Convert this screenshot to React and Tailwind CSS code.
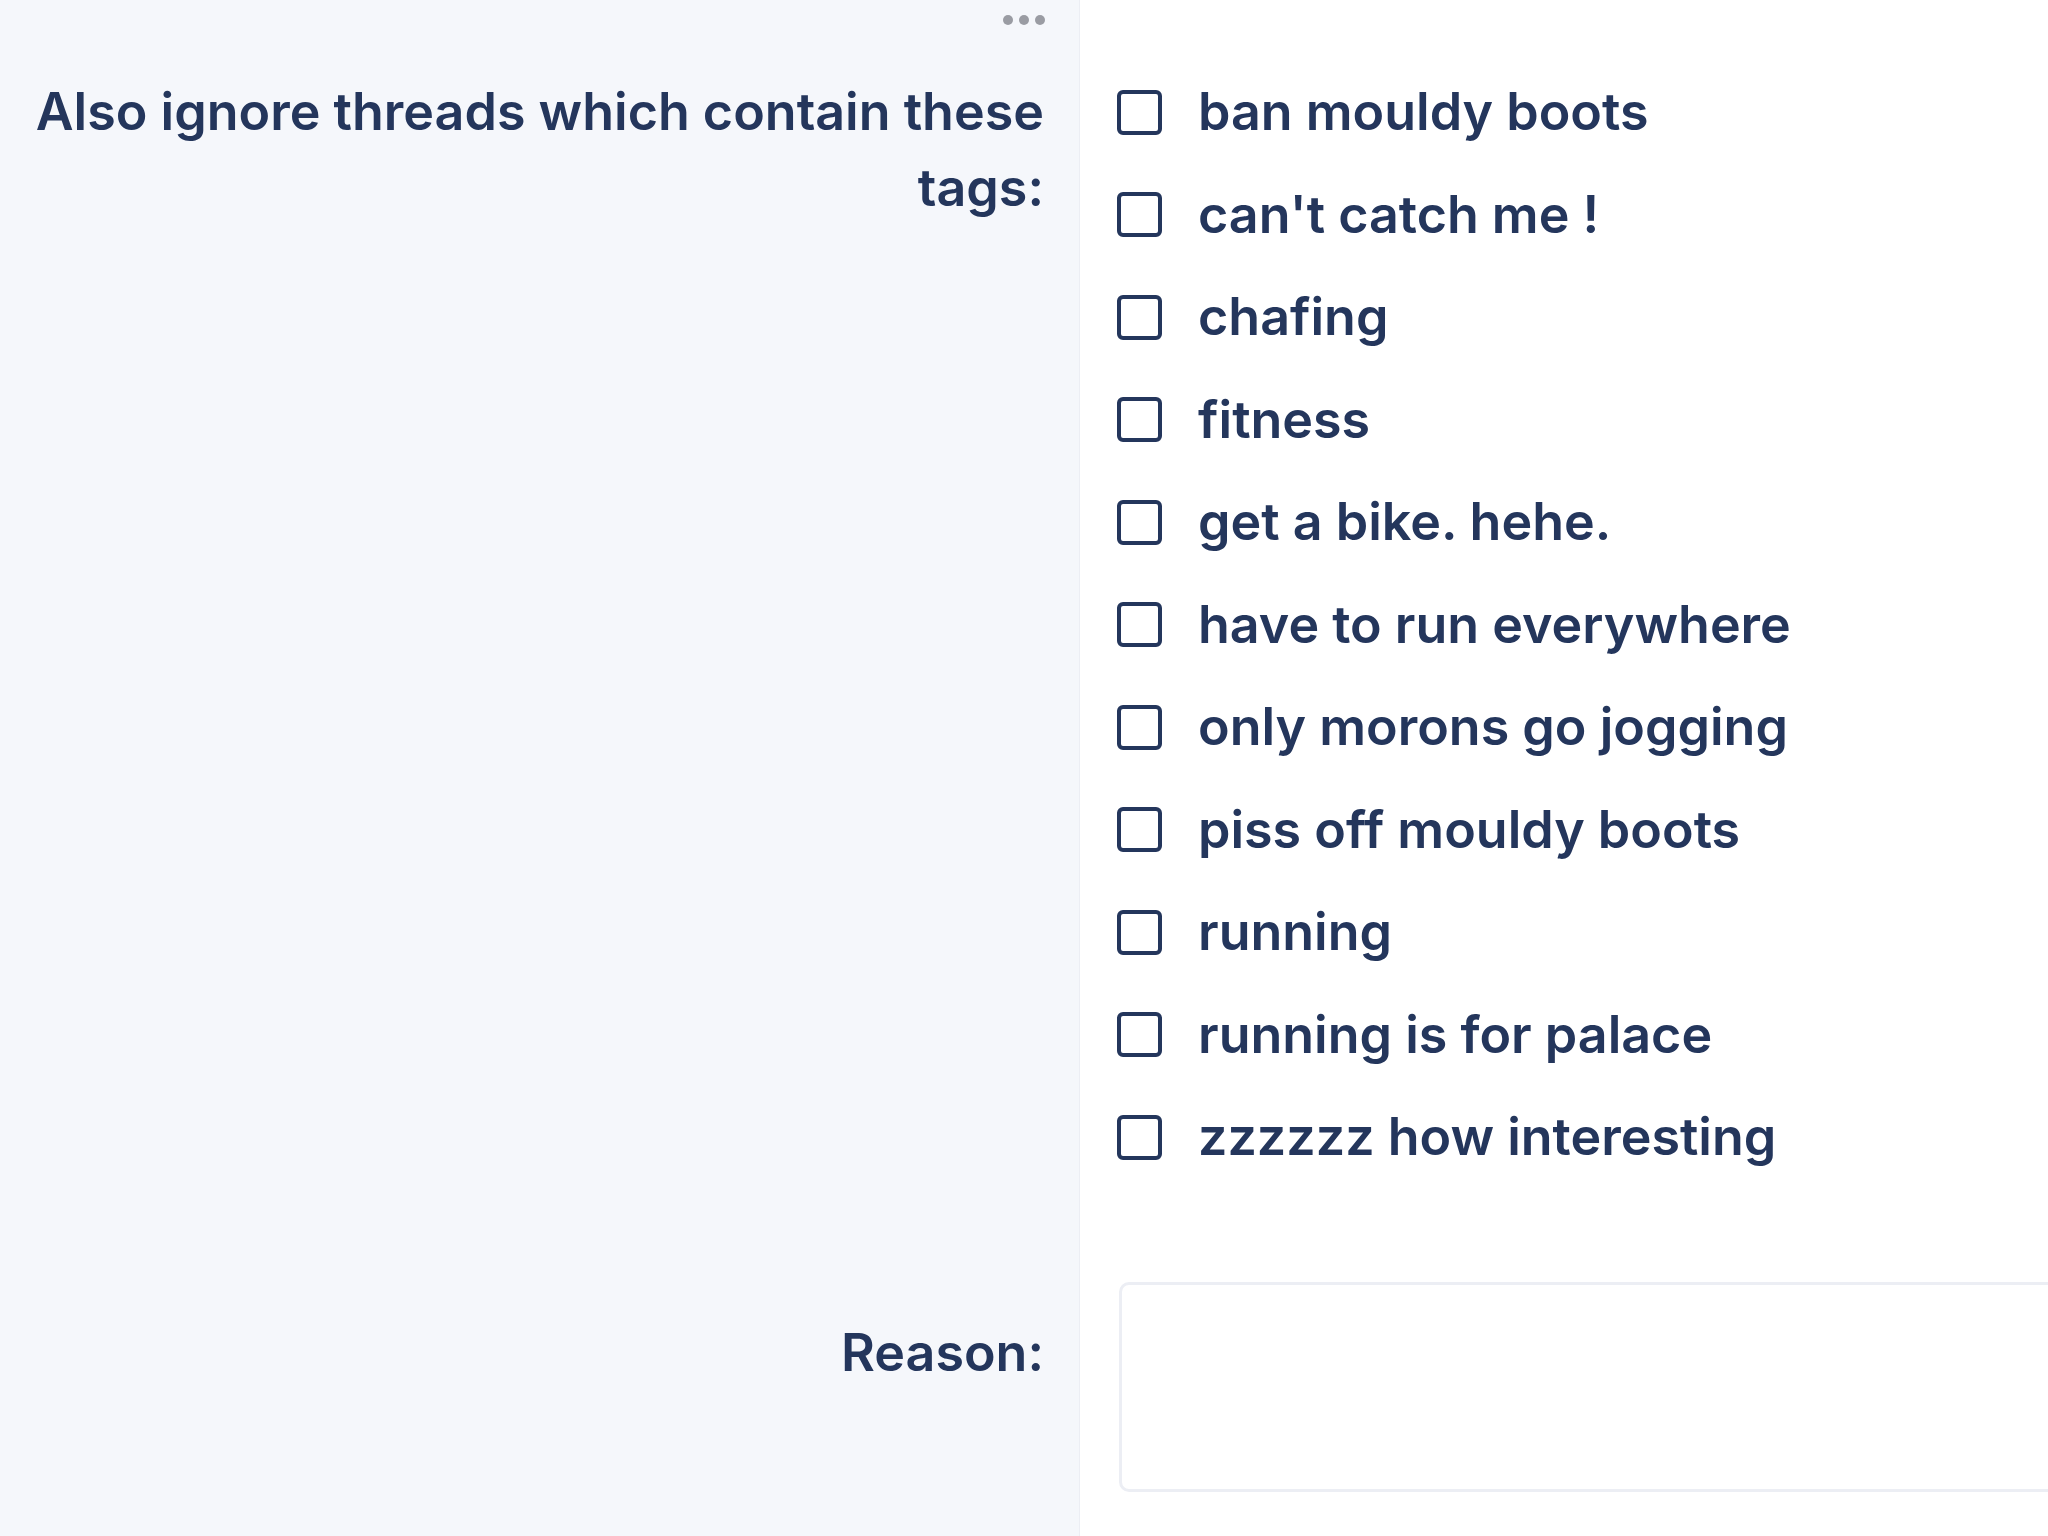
import React from "react";

const tags = [
  "ban mouldy boots",
  "can't catch me !",
  "chafing",
  "fitness",
  "get a bike. hehe.",
  "have to run everywhere",
  "only morons go jogging",
  "piss off mouldy boots",
  "running",
  "running is for palace",
  "zzzzzz how interesting",
];

export default function App() {
  return (
    <div
      className="w-[2048px] h-[1536px] overflow-hidden flex flex-col bg-white text-[#24365c]"
      style={{ fontFamily: "Inter, 'Noto Sans', sans-serif" }}
    >
      {/* top row with dots */}
      <div className="flex h-[40px] shrink-0">
        <div className="w-[1080px] shrink-0 bg-[#f5f7fb] border-r border-[#eceef4] flex items-center justify-end pr-[34px] gap-[6px]">
          <span className="w-[10px] h-[10px] rounded-full bg-[#9a9ca3]" />
          <span className="w-[10px] h-[10px] rounded-full bg-[#9a9ca3]" />
          <span className="w-[10px] h-[10px] rounded-full bg-[#9a9ca3]" />
        </div>
        <div className="flex-1" />
      </div>

      {/* tags row */}
      <div className="flex shrink-0">
        <div className="w-[1080px] shrink-0 bg-[#f5f7fb] border-r border-[#eceef4] pt-[34px] pl-[22px] pr-[35px] text-right text-[52px] leading-[76px] font-semibold">
          Also ignore threads which contain these tags:
        </div>
        <div className="flex-1 pt-[34px] pl-[37px]">
          <div className="flex flex-col gap-[26.5px]">
            {tags.map((t) => (
              <label key={t} className="flex items-center gap-[36px] text-[52px] leading-[76px] font-semibold whitespace-nowrap">
                <span className="w-[45px] h-[45px] shrink-0 border-[4px] border-[#24365c] rounded-[6px] bg-white" />
                <span>{t}</span>
              </label>
            ))}
          </div>
        </div>
      </div>

      {/* reason row */}
      <div className="flex shrink-0">
        <div className="w-[1080px] shrink-0 bg-[#f5f7fb] border-r border-[#eceef4] pt-[140px] pr-[35px] text-right text-[52px] leading-[76px] font-semibold">
          Reason:
        </div>
        <div className="flex-1 pt-[107px] pl-[39px]">
          <div className="w-[1100px] h-[210px] border-[3px] border-[#eceef4] rounded-[10px] bg-white" />
        </div>
      </div>

      {/* filler */}
      <div className="flex flex-1">
        <div className="w-[1080px] shrink-0 bg-[#f5f7fb] border-r border-[#eceef4]" />
        <div className="flex-1" />
      </div>
    </div>
  );
}
